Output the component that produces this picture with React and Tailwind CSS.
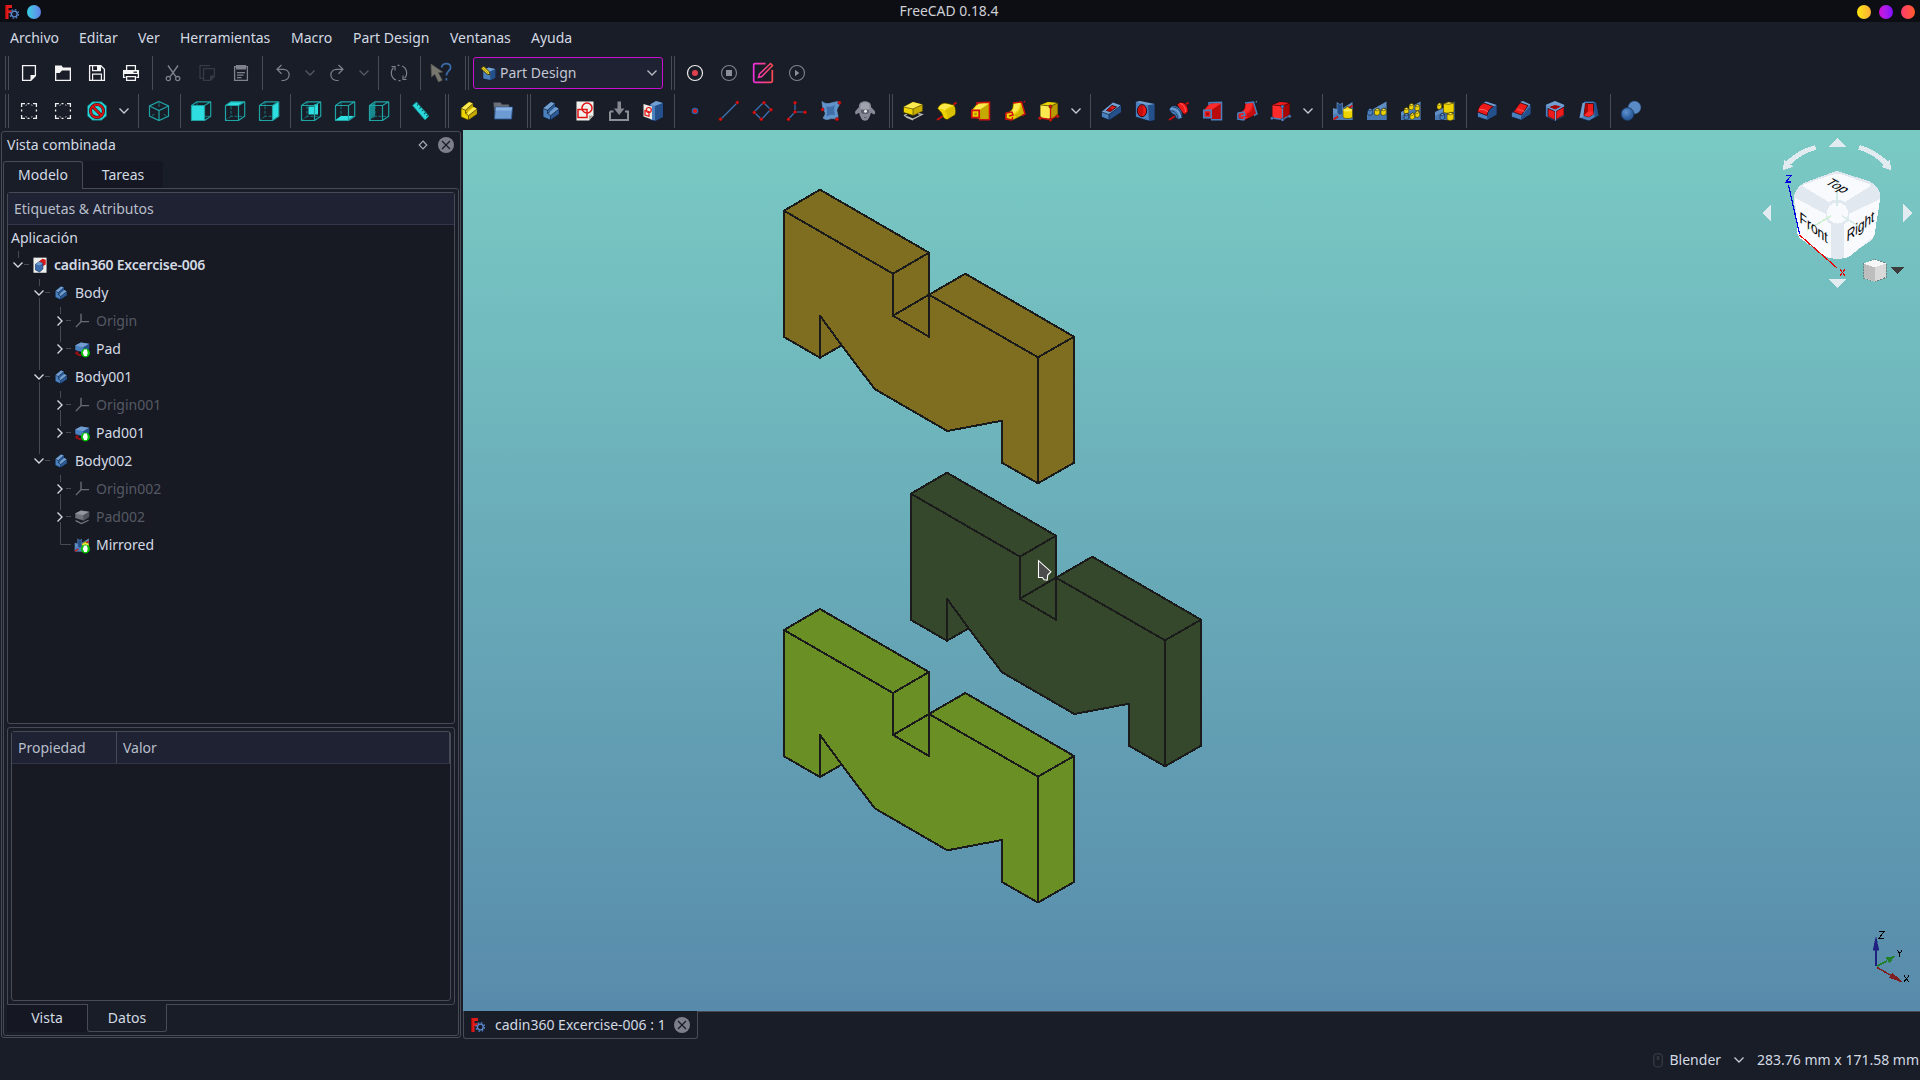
import React from "react";

/* ---------- icon primitives: every icon lives in a 22x22 box ---------- */
const Ic = ({ children, size = 22 }) => (
  <svg width={size} height={size} viewBox="0 0 22 22" fill="none" className="block shrink-0 overflow-visible">
    {children}
  </svg>
);

const Y = { a: "#fce94f", b: "#edd400", c: "#b79b00", o: "#3a3200" };
const R = { a: "#ff2b2b", b: "#ef1a1a", c: "#a80505", o: "#2b0505" };
const B = { a: "#729fcf", b: "#4a80bd", c: "#24508c", o: "#0b1a33" };

const Chevron = ({ color = "#c9ccd4" }) => (
  <svg width="12" height="8" viewBox="0 0 12 8" fill="none" className="block shrink-0">
    <path d="M1.5 1.5 6 6l4.5-4.5" stroke={color} strokeWidth="1.3" />
  </svg>
);

const Logo = ({ size = 14 }) => (
  <svg width={size} height={size} viewBox="0 0 14 14" fill="none" className="block shrink-0">
    <path d="M0 0h7v3H3.500v2.300h3v2.700h-3V14H0z" fill="#e21b1b" />
    <path d="M0 0h1.300V14H0z" fill="#a30b0b" />
    <circle cx="9.3" cy="9" r="4.3" stroke="#4f7cc0" strokeWidth="1.3" strokeDasharray="1.7 1.68" />
    <circle cx="9.3" cy="9" r="2.900" stroke="#5b8bd0" strokeWidth="1.400" fill="#161a28" />
  </svg>
);

const CloseDot = () => (
  <svg width="16" height="16" viewBox="0 0 16 16" className="block shrink-0">
    <circle cx="8" cy="8" r="8" fill="#7c7f8a" />
    <path d="M4 4l8 8M12 4l-8 8" stroke="#1a1d28" strokeWidth="1.3" />
  </svg>
);

/* ---------- file toolbar ---------- */
const INew = () => (
  <Ic><path d="M4.6 3.6h12.8v10.2l-4.6 4.6H4.6z" stroke="#f4f4f4" strokeWidth="1.3" /><path d="M18 13h-5.500v6z" fill="#f4f4f4" /></Ic>
);
const IOpen = () => (
  <Ic><path d="M3 4v15h16V5.500h-8L9.500 3.500H3z" fill="#f4f4f4" /><path d="M4.300 11h3.400l2.300-2.500h7.700v9.200H4.300z" fill="#191d28" /></Ic>
);
const ISave = () => (
  <Ic>
    <path d="M3.600 3.600h11.200l3.600 3.600v11.200H3.600z" stroke="#f4f4f4" strokeWidth="1.3" />
    <path d="M6.600 3.600v5h7.800v-5M6.600 18.400v-6.200h8.800v6.200" stroke="#f4f4f4" strokeWidth="1.2" />
    <path d="M11 4h3v4h-3z" fill="#f4f4f4" />
  </Ic>
);
const IPrint = () => (
  <Ic>
    <path d="M6.600 8V3.600h8.800V8M5.500 15.400H3.600V8.600h14.800v6.800h-2" stroke="#f4f4f4" strokeWidth="1.3" />
    <path d="M3.500 8.500h15v3.500h-15z" fill="#f4f4f4" /><path d="M13.500 9.600h3.500v1.200h-3.500z" fill="#191d28" />
    <path d="M6.600 14.600h8.800v3.800H6.600z" stroke="#f4f4f4" strokeWidth="1.3" />
  </Ic>
);
const ICut = () => (
  <Ic>
    <path d="M6 3.500l7.800 11.200M16 3.500L8.200 14.700" stroke="#7f828c" strokeWidth="1.400" />
    <circle cx="6.300" cy="16.500" r="2.100" stroke="#7f828c" strokeWidth="1.2" /><circle cx="15.700" cy="16.500" r="2.100" stroke="#7f828c" strokeWidth="1.200" />
  </Ic>
);
const ICopy = () => (
  <Ic>
    <path d="M13.500 4V3.600H4v12.800h3" stroke="#363a42" strokeWidth="1.3" />
    <path d="M7.600 6.600h10.800v7.800l-4 4H7.600z" stroke="#363a42" strokeWidth="1.3" /><path d="M19 13.500h-5V19z" fill="#363a42" />
  </Ic>
);
const IPaste = () => (
  <Ic>
    <path d="M4.600 4.600h12.800v13.800H4.600z" stroke="#7f828c" strokeWidth="1.3" />
    <path d="M6 3h10v4.500H6zM7 10h8v1.200H7zM7 12.500h6.500v1.200H7zM7 15h4.500v1.200H7z" fill="#7f828c" />
  </Ic>
);
const IUndo = () => (
  <Ic><path d="M9.500 3 5 7.300l4.500 4.400M5 7.300h6.500a5.600 5.600 0 1 1 0 11.200h-2" stroke="#7f828c" strokeWidth="1.200" /></Ic>
);
const IRedo = () => (
  <Ic><path d="M12.500 3 17 7.300l-4.500 4.400M17 7.300h-6.500a5.600 5.600 0 1 0 0 11.200h2" stroke="#7f828c" strokeWidth="1.200" /></Ic>
);
const IRefresh = () => (
  <Ic>
    <path d="M8 18a7.600 7.600 0 0 1-2.500-12.300M14 4a7.600 7.600 0 0 1 2.500 12.300" stroke="#7f828c" strokeWidth="1.200" />
    <path d="M3.500 4.500H7v4M18.500 17.500H15v-4M9.500 3.400a8 8 0 0 1 2-.1M10.500 18.700a8 8 0 0 0 2-.1" stroke="#7f828c" strokeWidth="1.200" />
  </Ic>
);
const IHelp = () => (
  <Ic>
    <path d="M1 2l.5 13 3.300-2.800L8.500 20l3.800-1.800-3.900-7.400 4.300-.8z" fill="#77776f" stroke="#55554f" strokeWidth=".6" />
    <path d="M11.500 5.500C12 2.800 14 1.600 16.300 1.600c2.700 0 4.300 1.700 4.300 3.800 0 3.500-4.200 3.600-4.200 8.100M16.400 16v2.500" stroke="#3a6ca8" strokeWidth="1.700" />
  </Ic>
);
const IRecord = () => (<Ic><circle cx="11" cy="11" r="7.500" stroke="#ececec" strokeWidth="1.200" /><circle cx="11" cy="11" r="3" fill="#e0404f" /></Ic>);
const IStop = () => (<Ic><circle cx="11" cy="11" r="7.500" stroke="#7f828c" strokeWidth="1.100" /><path d="M8 8h6v6H8z" fill="#8b8e98" /></Ic>);
const IEdit = () => (
  <Ic>
    <defs><linearGradient id="pinkEdit" gradientUnits="userSpaceOnUse" x1="1" y1="0" x2="21" y2="0"><stop offset="0" stopColor="#f02fe0" /><stop offset="1" stopColor="#fb4a50" /></linearGradient></defs>
    <path d="M13.500 1.600H3q-1.300 0-1.300 1.300V19q0 1.300 1.300 1.300h16q1.300 0 1.300-1.300V8" stroke="url(#pinkEdit)" strokeWidth="1.700" />
    <path d="M6.500 15.500l1-3.500L18.500 1.500l2 2L9.800 14.500z" stroke="url(#pinkEdit)" strokeWidth="1.500" />
  </Ic>
);
const IPlay = () => (<Ic><circle cx="11" cy="11" r="7.500" stroke="#7f828c" strokeWidth="1.100" /><path d="M9 7.800 13.300 11 9 14.200z" fill="#8b8e98" /></Ic>);

/* ---------- view toolbar ---------- */
const IFit = () => (
  <Ic>
    <path d="M3.600 7V3.600H7M15 3.600h3.400V7M18.400 15v3.400H15M7 18.400H3.600V15" stroke="#f0f0f0" strokeWidth="1.300" />
    <path d="M9.500 3.600h3M9.500 18.400h3M3.600 9.500v3M18.400 9.500v3" stroke="#f0f0f0" strokeWidth="1.300" strokeDasharray="2 1.500" />
    <path d="M7.500 5.500l1.500-.8M13 4.700l1.500.8M7.500 16.500l1.500.8M13 17.300l1.500-.8" stroke="#a9abb2" strokeWidth="1" />
  </Ic>
);
const IDraw = () => (
  <Ic>
    <path d="M6.500 1.800h9L20.500 6v10l-5 4.200h-9L1.500 16V6z" fill="#28d5d8" stroke="#0e7577" strokeWidth=".8" />
    <circle cx="11" cy="11" r="6.500" stroke="#3a0808" strokeWidth="3" /><path d="M6.500 6.500l9 9" stroke="#3a0808" strokeWidth="3" />
    <circle cx="11" cy="11" r="6.500" stroke="#d81414" strokeWidth="1.900" /><path d="M6.500 6.500l9 9" stroke="#d81414" strokeWidth="1.900" />
  </Ic>
);
const T = "#1fa3a4";
const IIso = () => (
  <Ic>
    <path d="M11 1.500 20.500 6v10L11 20.500 1.500 16V6zM1.500 6 11 10.500 20.500 6M11 10.500v10" stroke={T} strokeWidth="1.200" />
    <path d="M11 2v5M4 15.500l2.500-1.200M18 15.500l-2.500-1.200" stroke="#16797b" strokeWidth="1" />
  </Ic>
);
const faces = {
  front: "M1.500 5.500h13v15h-13z",
  top: "M1.500 5.500 7 1.800h13.700l-6.200 3.700z",
  right: "M14.500 5.500l6.200-3.700v14.500l-6.200 4.200z",
  rear: "M8.500 6.500h6V4H18v10.500H8.500z",
  bottom: "M1.500 20 7 16h13l-5.500 4z",
  left: "M1.500 5.500 7 3v12.500l-5.500 4.500z",
};
const ICube = ({ face }) => (
  <Ic>
    <path d="M7 1.800v14.500h13.700M7 16.300l-5.500 4.200" stroke="#16797b" strokeWidth="1" strokeDasharray={face === "front" ? "0" : "3 1.500"} />
    <path d={faces[face]} fill={face === "left" ? "#168a8e" : "#2edfe2"} />
    <path d="M1.500 5.500h13v15h-13zM1.500 5.500 7 1.800h13.700v14.500l-6.200 4.200M14.500 5.500l6.200-3.700" stroke={T} strokeWidth="1.200" strokeLinejoin="round" />
  </Ic>
);
const IRuler = () => (
  <Ic>
    <path d="M2.500 5.500 6.500 2l12.500 14-4 4z" fill="#2bd9dc" stroke="#127d80" strokeWidth=".8" />
    <path d="M8.500 4.200 7 5.500M11 7 9.300 8.600M13.300 9.700l-1.600 1.500M15.700 12.500 14 14M17.800 15l-1.500 1.300" stroke="#0d5f62" strokeWidth="1.100" />
  </Ic>
);

/* ---------- part design toolbar ---------- */
const Step = ({ c, size }) => (
  <Ic size={size}>
    <path d="M3 8.500 11 2l4 1.500v3l4 2.500v5L10 20l-7-3z" fill={c.b} stroke={c.o} strokeWidth=".8" />
    <path d="M3 8.500 11 2l4 1.500-7.500 6.700z" fill={c.a} /><path d="M9 12.500l7-5.500 3 2-8.500 6.700z" fill={c.a} />
    <path d="M10.500 15.700 19 9v5l-8.500 6zM7.500 10.200 15 3.500V7l-6 5.300z" fill={c.c} opacity=".75" />
    <path d="M3 8.500l4.500 1.700v3L10.500 15.700V20M7.500 10.200 15 3.500M10.500 15.700 19 9M7.500 13.200l2-1" stroke={c.o} strokeWidth=".7" />
  </Ic>
);
const IPart = () => <Step c={Y} />;
const IBody = () => <Step c={B} />;
const IGroup = () => (
  <Ic>
    <path d="M1.500 2.500h7l1.500 2h7V17h-14z" fill="#6d7076" stroke="#3e4148" strokeWidth=".6" />
    <path d="M3.500 7h17l-1 12h-17z" fill="#6d9bd4" stroke="#2c5896" strokeWidth=".8" /><path d="M4 7.600h15.800l-.3 3H3.700z" fill="#8ab4e4" />
  </Ic>
);
const ISketch = () => (
  <Ic>
    <path d="M2.500 1.500h17v14l-4.500 5H2.500z" fill="#f3f1ec" /><path d="M19.500 15.500H15v5z" fill="#a9a9a0" />
    <path d="M4 9.500h9v8H4z" stroke="#df1515" strokeWidth="1.500" /><circle cx="13" cy="8" r="5" stroke="#df1515" strokeWidth="1.500" />
  </Ic>
);
const IMap = () => (
  <Ic>
    <path d="M2 11.500V20h18v-8.500h-3" stroke="#8c8f96" strokeWidth="2" /><path d="M2 11.500h3.500" stroke="#8c8f96" strokeWidth="2" />
    <path d="M9.500 1.500h3.500v7h3.500L11.200 15 6 8.500h3.500z" fill="#85888f" />
  </Ic>
);
const IMapSketch = () => (
  <Ic>
    <path d="M8 4.500 14 1l7 2v14l-8 4-5-1z" fill={B.b} stroke={B.o} strokeWidth=".7" /><path d="M8 4.500 14 1l7 2-8 3z" fill={B.a} /><path d="M13 6l8-3v14l-8 4z" fill={B.c} />
    <path d="M1.500 4 10 6.500v13l-8.500-3z" fill="#eeeae4" /><path d="M3 10.500l4 1.200v4.500l-4-1.200z" stroke="#df1515" strokeWidth="1.200" /><circle cx="6.800" cy="10" r="2.500" stroke="#df1515" strokeWidth="1.200" />
  </Ic>
);
const Dot = ({ x, y, r = 1.700, f = "#e01414" }) => <circle cx={x} cy={y} r={r} fill={f} stroke="#5f0606" strokeWidth=".5" />;
const IPoint = () => (<Ic><circle cx="11" cy="11" r="3.300" fill="#2f62a5" /><circle cx="11" cy="11" r="2" fill="#e01414" /></Ic>);
const ILine = () => (<Ic><path d="M2.500 19.500 19.500 2.500" stroke="#3c73b4" strokeWidth="1.200" /><Dot x={2.500} y={19.300} /><Dot x={19.300} y={2.500} /></Ic>);
const IPlane = () => (<Ic><path d="M11.500 2.500 18.500 9.500 9.500 19.500 2 12z" stroke="#3c73b4" strokeWidth="1.300" /><Dot x={12} y={2.700} /><Dot x={19} y={9.700} /><Dot x={9.300} y={19.300} /><Dot x={2.300} y={12.500} /></Ic>);
const IAxes = () => (<Ic><path d="M9 12V3M9 12h10M9 12l-6.500 7" stroke="#3c73b4" strokeWidth="1.200" /><Dot x={9} y={2.700} /><Dot x={9} y={12} /><Dot x={19} y={12.300} /><Dot x={2.500} y={19.300} /></Ic>);
const IBinder = () => (
  <Ic>
    <path d="M2 1.500c3 2.500 6 2.500 9 1.500 3-.8 6-1.500 9-1.500.5 4-4 6.500-3 10 .7 2.500 1.500 5 .5 8-3-.5-5-1.500-8-.5-2 .8-4 .8-6.500-1 2-3 3-4.500 1.500-6.500C2.500 9.500 2.500 5 2 1.500z" fill="#5f93cc" stroke={B.a} strokeWidth=".6" />
    <path d="M6 6.500c3 .5 6 .5 9-1.500-1.500 4-1 6 0 10-3-.5-5-.5-8.500 1.500C7.500 13 7 9 6 6.500z" fill={B.c} opacity=".55" />
    <Dot x={19.500} y={2.700} /><Dot x={2.500} y={9.500} /><Dot x={17} y={19.300} />
  </Ic>
);
const ISheep = () => (
  <Ic>
    <path d="M5 7C4.500 3.500 7 1.200 11 1.200s6.500 2.300 6 5.800l3.800 4c.8 1.500.3 3-.8 3.500l-3.200-1.800c-.5 3.500-1.800 5-2.800 6.800-.8 1.500-5.200 1.500-6 0-1-1.800-2.300-3.300-2.800-6.800L2 14.500C1.200 14 .7 12.500 1.500 11z" fill="#868995" />
    <path d="M6.500 6C6.500 3.500 8 2.500 11 2.500s4.500 1 4.500 3.500v3h-9z" fill="#a0a3ad" /><path d="M7 10h8v2.500l-2 1.500H9l-2-1.500z" fill="#5c5f6b" /><circle cx="11.500" cy="11.300" r="1.500" fill="#eceef2" /><path d="M10 17.500h2.500" stroke="#5c5f6b" />
  </Ic>
);
const IPad = () => (
  <Ic>
    <path d="M2 15.500l9 3.500 9-4.500-4-1M2 15.500l3-1.500M4 17l7 3" stroke="#b9bab5" strokeWidth="1.300" />
    <path d="M1.500 7 11 2l9.500 2.500v6.500L11 15.500l-9.500-3z" fill={Y.b} stroke={Y.o} strokeWidth=".8" />
    <path d="M1.500 7 11 2l9.500 2.500L11 9z" fill={Y.a} /><path d="M11 9l9.500-4.500v6.500L11 15.500z" fill={Y.c} opacity=".7" />
    <path d="M1.500 7 11 9l9.500-4.500M11 9v6.500" stroke={Y.o} strokeWidth=".6" />
  </Ic>
);
const IRevolve = () => (
  <Ic>
    <path d="M17 5l3.500-2.500M1 20l6-4" stroke="#c80f0f" strokeWidth="2" />
    <path d="M1.500 8.500C3 4.500 6.500 2.500 10 3l8 2c2 3 2.300 7.500 1 10l-7.500 4.500c-2.500 0-3.500-1-4.500-3L5.500 13z" fill={Y.b} stroke={Y.o} strokeWidth=".8" />
    <path d="M2.500 8.500C4.500 5 7.500 3.700 10.500 4l7 1.700c-3.500.3-6.500 1.800-8.500 4.800C7 9.200 5 8.500 2.500 8.500z" fill={Y.a} /><path d="M11.500 19c0-3-.5-6-2.500-8.500l9-4.500c1.500 3 1.200 6 .5 8.500z" fill={Y.c} opacity=".35" />
  </Ic>
);
const Loft = ({ f, o }) => (
  <Ic>
    <path d="M2 10 7.500 3.500 19.500 2.500v17L8 18.500l-6-2z" fill={f.b} />
    <path d="M10 9.500 19.500 3.500v16L8 18.500z" fill={f.c} opacity=".75" /><path d="M3 10 9 3.800l10-.8-9 6.500z" fill={f.a} />
    <path d="M7 5V2.800l12.500-.5v17.500H9" stroke={o} strokeWidth="1.500" /><path d="M1.800 10.300h7.400v7.400H1.800z" fill={f.b} stroke={o} strokeWidth="1.700" /><path d="M4.200 12.700h2.600v2.600H4.200z" fill={f.c} />
  </Ic>
);
const Sweep = ({ f, o }) => (
  <Ic>
    <path d="M2 13 6 11.500C8.500 9.500 9 7 9 3l8.500-1 3.500 12-6 3-6 3-7-1.500z" fill={f.b} stroke={f.o} strokeWidth=".7" />
    <path d="M7 11.500C9.500 9.500 10 7 10 4l6-1c0 6-3 9-8 11z" fill={f.a} />
    <path d="M10 15c4.500-2 6.500-5 7-10.500l3.500 9-8 4.500z" fill={f.c} opacity=".55" />
    <path d="M9 3l8.500-1 3.500 12-3 1.500M20 2.500l.7-1.500" stroke={o} strokeWidth="1.400" /><path d="M1.800 13l6.200-1 1 3-4 1M1.800 13v6l6 1 1-3" stroke={o} strokeWidth="1.500" />
  </Ic>
);
const PrimBox = ({ f, d }) => (
  <Ic>
    <path d="M2.500 5 10 2l9.500 1v12L13 19.500 2.500 18z" fill={f.b} stroke={f.o} strokeWidth=".7" />
    <path d="M2.500 5 10 2l9.500 1L13 6z" fill={f.b} /><path d="M2.500 5 13 6v13.500L2.500 18z" fill={f.a} /><path d="M13 6l6.500-3v12L13 19.500z" fill={f.c} />
    <path d="M2.500 5 13 6l6.500-3" stroke={f.o} strokeWidth=".7" />
    <path d="M12.500 6.500v13M2.500 18l10 1.500 7-4" stroke={d} strokeWidth="1.300" />
    {[[12.5, 6.5], [2, 18.3], [12.5, 19.8], [19.5, 16.3]].map(([x, y]) => <circle key={x + "-" + y} cx={x} cy={y} r="1.700" fill={d} stroke={f.o} strokeWidth=".4" />)}
  </Ic>
);
const IPocket = () => (
  <Ic>
    <path d="M1.500 12 13 2.500l8 3V12L9 20l-7.500-3z" fill={B.b} stroke={B.o} strokeWidth=".7" /><path d="M1.500 12 13 2.500l8 3L9 14.500z" fill={B.a} /><path d="M9 14.500 21 5.500V12L9 20z" fill={B.c} />
    <path d="M6.500 10.500 12 5.500l4.500 1.500-6 4.500z" fill={R.b} stroke={R.o} strokeWidth=".9" /><path d="M6.500 10.500l3-2.500 3 1.200-2 2.300z" fill={R.c} />
    <path d="M1.500 12 9 14.500 21 5.500M9 14.500V20" stroke={B.o} strokeWidth=".7" />
  </Ic>
);
const IHole = () => (
  <Ic>
    <path d="M1.500 2 6 1l14.500 3v16L15 21 1.500 17z" fill={B.b} stroke={B.o} strokeWidth=".7" /><path d="M14 5l6.500-1v16L15 21z" fill={B.c} /><path d="M1.500 2 6 1l14.500 3L14 5z" fill={B.a} />
    <ellipse cx="8" cy="10.700" rx="4.600" ry="6" fill={R.b} stroke={R.o} strokeWidth="1" /><path d="M8 5c2 1.500 2 9.500-.5 11.500C3 14 3 8 8 5z" fill={R.c} opacity=".6" />
  </Ic>
);
const IGroove = () => (
  <Ic>
    <path d="M17 5l3.500-2.500M1 20l6-4" stroke="#c80f0f" strokeWidth="2" />
    <path d="M9 4.500C11 2 14 2 16 3c3 2 4.500 5 4 8.500l-3 3c-2-1-4-2.500-5-5z" fill={R.b} stroke={R.o} strokeWidth=".7" /><path d="M12 3.500c3 .5 5.500 4 5.500 8.500" stroke="#ff6060" strokeWidth="1" />
    <path d="M1 10C2 6.500 5 5 8 6c4 1.500 7 6 6.500 11.500L11 19.500c-2.500-.5-3.500-2-4-4.500L4.500 14z" fill={B.b} stroke={B.o} strokeWidth=".7" /><path d="M2.500 9c4-1.500 9.500 2.500 10 9" stroke={B.a} strokeWidth="1.500" /><path d="M5 7c4.500 0 8.700 4.500 8.700 10M2 11c4-1 7.500 3 8 8" stroke={B.o} strokeWidth=".6" />
  </Ic>
);

/* ---------- transforms and dress-up ---------- */
const Backdrop = () => <><path d="M1 12 8 8.500 20.500 1.500v18.500H1z" fill="#5f8fc4" /><path d="M1 16l19.500-10v14H1z" fill="#3868a4" opacity=".6" /></>;
const Blk = ({ x, y, s = 5, c = Y }) => (
  <g stroke={c.o} strokeWidth=".6"><path d={`M${x} ${y + 1.2}l${s * 0.5}-1.800 ${s * 0.55} 1v${s * 0.9}l-${s * 0.5} 1.500-${s * 0.55}-.8z`} fill={c.b} /><path d={`M${x} ${y + 1.2}l${s * 0.5}-1.800 ${s * 0.55} 1-${s * 0.5} 1.400z`} fill={c.a} /></g>
);
const Mirror = ({ size }) => (
  <Ic size={size}>
    <path d="M1 8 8 10 14 6 20.500 2v18H1z" fill="#5f8fc4" /><path d="M1 15l19.500-9v14H1z" fill="#3f6fab" opacity=".6" />
    <path d="M5 2.500 8 4.500 10.500 3v11L8 15.500 5 13z" fill={B.c} stroke={B.a} strokeWidth=".6" /><path d="M1.500 19.500l4.500-3M17 8l3.500-2.500" stroke="#d01212" strokeWidth="2" />
    <path d="M11 10c0-1 2-2 3-2l.5-1.500h2L17 8c1.500 0 3.500 1 3.500 2v7c-1 2-8.500 2-9.500 0z" fill={Y.b} stroke={Y.o} strokeWidth=".6" /><ellipse cx="15.700" cy="10" rx="4.300" ry="1.500" fill={Y.a} />
  </Ic>
);
const ILinear = () => (<Ic><Backdrop /><Blk x={1.500} y={9} s={5} c={B} /><Blk x={8.500} y={9} s={5} /><Blk x={15} y={9} s={5} /></Ic>);
const IPolar = () => (<Ic><Backdrop /><Blk x={4} y={8} s={4.500} /><Blk x={9} y={4} s={4.500} /><Blk x={15} y={5} s={4.500} /><Blk x={15} y={11.500} s={4.500} /><Blk x={10} y={13.500} s={4.500} /><Blk x={4} y={14} s={4.500} c={B} /></Ic>);
const IMulti = () => (<Ic><Backdrop /><Blk x={3} y={3.500} s={4.500} /><Blk x={9.500} y={2.500} s={10} /><Blk x={6} y={14} s={4.500} c={B} /><Blk x={13} y={13} s={6.500} /></Ic>);
const IFillet = () => (
  <Ic>
    <path d="M1.500 13C2 7 5 3 10 1.500L20.500 5v9.500L11 20 1.500 17z" fill={B.b} stroke={B.o} strokeWidth=".7" /><path d="M11 16c0-5 3-9 9.500-11v9.500L11 20z" fill={B.c} /><path d="M10 1.500 20.500 5l-3 1.500L7.500 3z" fill={B.a} />
    <path d="M1.500 12C2 8 4 4.500 8 3l9.500 3.500c-4 2-6 5-6.500 9z" fill={R.b} stroke={R.o} strokeWidth=".8" /><path d="M3 9.500c3-.5 6 0 9 2.500" stroke="#ff6b6b" strokeWidth="1" />
  </Ic>
);
const IChamfer = () => (
  <Ic>
    <path d="M1.500 13.500 11 1.500l9.500 3V14L11 20l-9.500-3z" fill={B.b} stroke={B.o} strokeWidth=".7" /><path d="M11 16.500l9.500-11V14L11 20z" fill={B.c} /><path d="M10 2l3-1 7.500 3.500-2.500 1z" fill={B.a} />
    <path d="M3.500 12 10 2.700 18 5.500 11.500 15z" fill={R.b} stroke={R.o} strokeWidth=".8" /><path d="M7 9l7.500 2.500" stroke="#ff5d5d" strokeWidth="1.500" opacity=".6" />
  </Ic>
);
const IDraft = () => (
  <Ic>
    <path d="M1.500 5 11 1l9.500 4v11L11 21l-9.500-4.500z" fill={B.b} stroke={B.o} strokeWidth=".7" /><path d="M1.500 5 11 1l9.500 4L11 9z" fill={B.a} />
    <path d="M4 8.500l7 3V20l-7-3.500zM12 11.500l8-4.500V15l-8 4.500z" fill={R.b} stroke={R.o} strokeWidth=".7" /><path d="M5 7 11 5l6 1.500-6 3z" fill={R.c} />
    <path d="M11.500 10.500V20.500M2.500 6.500l9 4 8.500-5" stroke={B.a} strokeWidth="1.200" />
  </Ic>
);
const IShell = () => (
  <Ic>
    <path d="M4.500 3 7 1.200h8.500L18 2.500l2.500 13L11 21l-9.500-3z" fill={B.b} stroke={B.o} strokeWidth=".7" /><path d="M4.500 3 1.500 18l4-1.500L8 3z" fill={B.a} /><path d="M15.500 1.500l2.500 1 2.500 13L16.500 17z" fill={B.c} />
    <path d="M7.500 3.500h8V14L11 17l-5-1.500z" fill={R.b} stroke={R.o} strokeWidth=".8" /><path d="M7.500 3.500h2.500v8L6 15.500z" fill={R.c} /><path d="M6 15.500 10 11.500h5.500V14L11 17z" fill={R.a} />
  </Ic>
);
const IBool = () => (
  <Ic>
    <defs><radialGradient id="ballBlue" cx=".4" cy=".35"><stop offset="0" stopColor="#5d92cf" /><stop offset="1" stopColor="#2d5f9f" /></radialGradient></defs>
    <circle cx="14.500" cy="7.500" r="6.200" fill="#5a8bc4" stroke="#4272ac" strokeWidth=".6" /><circle cx="7.500" cy="14" r="6.400" fill="url(#ballBlue)" stroke="#1c3b68" strokeWidth=".9" />
  </Ic>
);
const IWorkbench = () => (
  <Ic size={16}>
    <path d="M4 7 12 3.500 21 5.500v12l-7 3.500L4 19z" fill={B.b} stroke={B.o} strokeWidth=".8" /><path d="M14 8.500l7-3v12L14 21z" fill={B.c} /><path d="M4 7l8-3.500 9 2-7 3z" fill={B.a} />
    <path d="M1.500 5 5 1.500l7.500 7.500 1.500 4.500-4.500-1z" fill="#e8d22a" stroke="#3a3200" strokeWidth="1.200" /><path d="M3.500 3.500l7.500 7.500" stroke="#8a7a10" strokeWidth=".8" />
  </Ic>
);

/* ---------- toolbar pieces ---------- */
const Cell = ({ children }) => <div className="flex w-[34px] shrink-0 items-center justify-center">{children}</div>;
const Drop = ({ dim }) => <div className="flex w-5 shrink-0 items-center justify-center"><Chevron color={dim ? "#565964" : "#c9ccd4"} /></div>;
const Sep = () => <div className="flex w-2 shrink-0 justify-center pl-px"><div className="h-[34px] w-px bg-[#484b56]" /></div>;
const Handle = ({ first }) => (
  <div className={first ? "flex w-3 shrink-0 gap-0.5 pl-[5px]" : "flex w-[14px] shrink-0 gap-0.5 pl-[7px]"}>
    <div className="h-[34px] w-px bg-[#484b56]" /><div className="h-[34px] w-px bg-[#484b56]" />
  </div>
);
const Bar = ({ items }) => items.map((it, i) => {
  if (it === "|") return <Sep key={i} />;
  if (it === "v") return <Drop key={i} />;
  if (it === "d") return <Drop key={i} dim />;
  if (it === "H") return <Handle key={i} />;
  return <Cell key={i}>{it}</Cell>;
});

const menus = [
  ["Archivo", "w-[69px]"], ["Editar", "w-[59px]"], ["Ver", "w-[42px]"], ["Herramientas", "w-[111px]"],
  ["Macro", "w-[62px]"], ["Part Design", "w-[97px]"], ["Ventanas", "w-[81px]"], ["Ayuda", "w-[60px]"],
];

/* ---------- model tree ---------- */
const line = "#474a55";
const Branch = ({ kind, last }) => (
  <svg width="21" height="28" viewBox="0 0 21 28" fill="none" className="block shrink-0">
    {kind === "pass" && <path d="M10.500 0v28" stroke={line} />}
    {(kind === "open" || kind === "closed") && (
      <>
        <path d={last ? "M10.500 0v7M16 13.500h5" : "M10.500 0v7M10.500 19v9M16 13.500h5"} stroke={line} />
        <path d={kind === "open" ? "M5.500 11.500l4.500 4.500 4.500-4.500" : "M7.500 9.500l4.500 4.500L7.500 18.500"} stroke="#d5d8de" strokeWidth="1.400" />
      </>
    )}
    {kind === "leaf" && <path d="M10.500 0v13.500H21" stroke={line} />}
  </svg>
);
const Eye = () => <><circle cx="15.200" cy="15.800" r="5.500" fill="#06c306" /><path d="M13.500 11.500h3.500l1 4-1 4h-3.500l-1.500-4z" fill="#fff" /></>;
const TDoc = () => (
  <Ic size={18}>
    <path d="M3 2h16v18.500H3z" fill="#efefec" /><path d="M10 6.500l4-3 4 1v6l-4 2-4-2z" fill="#d81818" />
    <path d="M5.500 10 10 7l4.500 2v7l-4 3.500-5-2.500z" fill="#3c6cab" stroke="#16305a" strokeWidth=".8" /><path d="M5.500 10 10 7l4.500 2-4 2.500z" fill="#6f9bd0" />
  </Ic>
);
const TOrigin = () => <Ic size={18}><path d="M9.800 11.500V2M9.800 11.800h9.800M9.800 11.800 3.500 18.500" stroke="#696c76" strokeWidth="1.700" /></Ic>;
const TPad = ({ gray }) => (
  <Ic size={18}>
    <g transform="translate(3.200 3.200) scale(.72)">
      {gray
        ? <path d="M0 17l10 5 12-5.500" stroke="#777980" strokeWidth="2" />
        : <path d="M0 18l9 4M0 18l4-3" stroke="#a01010" strokeWidth="3" />}
      <path d="M-1 5 9 0l14 2v9l-10 6-14-4z" fill={gray ? "#6f727a" : B.b} stroke="#15181f" strokeWidth=".8" />
      <path d="M-1 5 9 0l14 2-10 6z" fill={gray ? "#93969d" : B.a} /><path d="M13 8l10-6v9l-10 6z" fill={gray ? "#50535b" : B.c} />
    </g>
    {!gray && <Eye />}
  </Ic>
);
const TMirror = () => (
  <div className="relative"><Mirror size={16} /><div className="absolute -left-px -top-px"><Ic size={18}><Eye /></Ic></div></div>
);
const tree = [
  { b: ["open!"], icon: <TDoc />, label: "cadin360 Excercise-006", bold: true },
  { b: ["none", "open"], icon: <Step c={B} size={16} />, label: "Body" },
  { b: ["none", "pass", "closed"], icon: <TOrigin />, label: "Origin", dim: true },
  { b: ["none", "pass", "closed!"], icon: <TPad />, label: "Pad" },
  { b: ["none", "open"], icon: <Step c={B} size={16} />, label: "Body001" },
  { b: ["none", "pass", "closed"], icon: <TOrigin />, label: "Origin001", dim: true },
  { b: ["none", "pass", "closed!"], icon: <TPad />, label: "Pad001" },
  { b: ["none", "open!"], icon: <Step c={B} size={16} />, label: "Body002" },
  { b: ["none", "none", "closed"], icon: <TOrigin />, label: "Origin002", dim: true },
  { b: ["none", "none", "closed"], icon: <TPad gray />, label: "Pad002", dim: true },
  { b: ["none", "none", "leaf"], icon: <TMirror />, label: "Mirrored" },
];

/* ---------- 3D scene ---------- */
const Solid = ({ dx, dy, fill }) => (
  <g transform={`translate(${dx} ${dy})`} stroke="#1b1b1b" strokeWidth="2" strokeLinejoin="round" shapeRendering="crispEdges">
    <path fill={fill} d="M784 210.700 820 189.700 929 252.700V294.700L965.300 273.700 1074 336.700V462.700L1038 483.300 1002 462.700V420.700L947.300 431 874.700 389 841.700 345.300 820 357.700 784 337z" />
    <path fill="none" d="M784 210.700 893 273.700 929 252.700M893 273.700V315.700L929 294.700 1038 357.300 1074 336.700M1038 357.300V483.300M929 294.700V336.700L893 315.700M820 357.700V315.700L841.700 345.300" />
  </g>
);
const NavCube = () => (
  <g shapeRendering="crispEdges">
    <g fill="#e1ebf0">
      <path d="M1837.500 138l8.500 9h-17zM1837.500 288l8.500-9h-17zM1763 213l8-8.500v17zM1912 213l-9-9v18z" />
      <path d="M1783 170l1-10 2 1.500c8-8 18-13.500 29-16.500l1.500 4.500c-10 3-19 8-26 15l2.500 2.500z" />
      <path d="M1891 170l-1-10-2 1.500c-8-8-18-13.500-28-16.500l-1.500 4.500c10 3 18 8 25 15l-2.500 2.500z" />
    </g>
    <path d="M1832 172.500q5-2.500 10 0l28 9c7 4 10 9 10.500 15.500l-6 38q-1 4-4 6l-24 16q-9 4-18 0l-25-17q-3.500-3-4-7l-6-32c0-9 4-14 10-18z" fill="#e1e8ef" />
    <g fill="#f8fafd">
      <path d="M1804 184.500 1834 174q3.500-1 7 0l28 10q2 1.500 0 3l-24 15q-8-5-16 0l-25-15q-2-1.500 0-2.500z" />
      <path d="M1795 198l31 16c-1 6 2 9 5 10v34q-3 0-6-2l-24-17q-3-2-3.500-5z" />
      <path d="M1880 199l-31 15c1 6-2 9-5 10v34q3 0 6-2l21-17q3-2 3.500-5z" />
      <circle cx="1837.500" cy="213" r="10.500" />
    </g>
    <path d="M1837 179v27" stroke="#d5ebe8" strokeWidth="1.500" /><path d="M1831 216l-24 14" stroke="#c9f0cf" strokeWidth="1.500" /><path d="M1842 216l20 12" stroke="#d5ebe8" strokeWidth="1.500" />
    <g fontFamily="'Liberation Sans'" fill="#000">
      <text transform="matrix(.76 .42 -.8 .45 1824 183)" fontSize="15.500">Top</text>
      <text transform="matrix(.78 .6 0 1 1799.500 222)" fontSize="15.500">Front</text>
      <text transform="matrix(.74 -.56 -.04 1 1846.500 242)" fontSize="16">Right</text>
    </g>
    <path d="M1788.500 185l11 49" stroke="#0000e0" strokeWidth="1.200" /><path d="M1799.500 235l37.500 33" stroke="#e80000" strokeWidth="1.200" />
    <path d="M1786 175.500h5l-5 6.500h5" fill="none" stroke="#0000e0" strokeWidth="1.100" /><path d="M1840 269l5 7M1845 269l-5 7" stroke="#e80000" strokeWidth="1.100" />
    <path d="M1863.500 263.500 1874.500 259.500 1886 263.500V277.500L1874.500 281.500 1863.500 278z" fill="#d9d9d9" stroke="#70807f" strokeDasharray="2 1" />
    <path d="M1863.500 263.500 1874.500 259.500 1886 263.500 1874.500 267.500z" fill="#f6f6f6" /><path d="M1863.500 263.500l11 4v14l-11-4z" fill="#bdbdbd" />
    <path d="M1890 267h14l-7 7z" fill="#3c3c3c" />
  </g>
);
const AxisCross = () => (
  <g shapeRendering="crispEdges">
    <path d="M1876 966v-20" stroke="#1f2180" strokeWidth="2" /><path d="M1876 937l3 13h-6z" fill="#1f2180" stroke="#1f2180" strokeWidth=".5" />
    <path d="M1877 966l10-5" stroke="#23802a" strokeWidth="1.500" /><path d="M1894.500 956.500l-5 5.500-3.500-4z" fill="#23802a" stroke="#23802a" />
    <path d="M1877 967.500l16 9" stroke="#7f1f22" strokeWidth="1.500" /><path d="M1890 977.500l2.500-4 9.500 8.500z" fill="#7f1f22" stroke="#7f1f22" />
    <g stroke="#000" strokeWidth="1" fill="none"><path d="M1879 931.500h5l-5 6.500h5" /><path d="M1897.500 950.500l2.200 3 2.200-3M1899.700 953.500v3.500" /><path d="M1904 975.500l5 6.500M1909 975.500l-5 6.500" /></g>
  </g>
);
const Scene = () => (
  <svg width="1457" height="881" viewBox="463 130 1457 881" className="block">
    <Solid dx={0} dy={0} fill="#7f6e20" />
    <Solid dx={127} dy={283} fill="#36482b" />
    <Solid dx={0} dy={419.300} fill="#6a8f25" />
    <path d="M1038.500 560.700V577.500h4l1.500 2.300 3.200.3.500-5 3.200-3.400z" fill="#4c4c4c" stroke="#fff" strokeWidth="1.100" />
    <NavCube />
    <AxisCross />
  </svg>
);

export default function App() {
  return (
    <div className="flex h-[1080px] w-[1920px] flex-col overflow-hidden bg-[#191d28] font-['Noto_Sans',sans-serif] text-sm leading-5 text-[#d3dae3]">
      <header className="grid h-[22px] shrink-0 grid-cols-3 items-center bg-[#0d0e13]">
        <div className="flex items-center gap-2 pl-[5px] pt-[2px]">
          <Logo />
          <div className="size-[14px] rounded-full bg-linear-to-r from-[#33cfe0] to-[#6080ea]" />
        </div>
        <div className="-ml-[22px] text-center text-[13.9px] text-[#cfd1d6]">FreeCAD 0.18.4</div>
        <div className="flex justify-end gap-2 pr-[5px] pt-[2px]">
          <div className="size-[14px] rounded-full bg-linear-to-r from-[#ffe607] to-[#ffae33]" />
          <div className="size-[14px] rounded-full bg-linear-to-r from-[#d202d8] to-[#8007ff]" />
          <div className="size-[14px] rounded-full bg-linear-to-r from-[#ff3a6b] to-[#ff5a21]" />
        </div>
      </header>

      <nav className="flex h-8 shrink-0 items-center pl-[10px]">
        {menus.map(([m, w]) => <div key={m} className={"shrink-0 whitespace-nowrap " + w}>{m}</div>)}
      </nav>

      <div className="flex h-[38px] shrink-0 items-center">
        <Handle first />
        <Bar items={[<INew />, <IOpen />, <ISave />, <IPrint />, "|", <ICut />, <ICopy />, <IPaste />, "|", <IUndo />, "d", <IRedo />, "d", "|", <IRefresh />, "|", <IHelp />, "H"]} />
        <div className="ml-px flex h-8 w-[190px] shrink-0 items-center rounded-[3px] border border-[#c80fd0] bg-[#1f2233] pl-[6px] pr-1">
          <IWorkbench />
          <span className="ml-1 flex-1 text-[#c3c7d1]">Part Design</span>
          <Chevron color="#b9bcc6" />
        </div>
        <div className="w-px" />
        <Bar items={["H", <IRecord />, <IStop />, <IEdit />, <IPlay />]} />
      </div>

      <div className="flex h-[38px] shrink-0 items-center">
        <Handle first />
        <Bar items={[<IFit />, <IFit />, <IDraw />, "v", "|", <IIso />, "|", <ICube face="front" />, <ICube face="top" />, <ICube face="right" />, "|", <ICube face="rear" />, <ICube face="bottom" />, <ICube face="left" />, "|", <IRuler />, "H", <IPart />, <IGroup />, "H",
          <IBody />, <ISketch />, <IMap />, <IMapSketch />, "|", <IPoint />, <ILine />, <IPlane />, <IAxes />, <IBinder />, <ISheep />, "H",
          <IPad />, <IRevolve />, <Loft f={Y} o="#d01212" />, <Sweep f={Y} o="#d01212" />, <PrimBox f={Y} d="#d01212" />, "v", "|",
          <IPocket />, <IHole />, <IGroove />, <Loft f={R} o="#4a80bd" />, <Sweep f={R} o="#4a80bd" />, <PrimBox f={R} d="#4a80bd" />, "v", "|",
          <Mirror />, <ILinear />, <IPolar />, <IMulti />, "|", <IFillet />, <IChamfer />, <IDraft />, <IShell />, "|", <IBool />]} />
      </div>

      <main className="flex h-[908px] shrink-0">
        <aside className="ml-px mt-[1px] flex h-[907px] w-[460px] shrink-0 flex-col rounded-[3px] border border-[#484b56]">
          <div className="flex h-[29px] shrink-0 items-center pl-[5px] pr-[6px] pb-[3px]">
            <span className="mb-px flex-1">Vista combinada</span>
            <svg width="10" height="10" viewBox="0 0 10 10" className="mr-[10px]"><path d="M5 1 8.800 5 5 9 1.200 5z" fill="none" stroke="#a5a8b0" strokeWidth="1.200" /></svg>
            <CloseDot />
          </div>
          <div className="relative z-10 ml-px flex h-7 shrink-0 text-center">
            <div className="h-[28px] w-[80px] rounded-t-[3px] border border-b-0 border-[#484b56] bg-[#191d28] pt-[3px]">Modelo</div>
            <div className="h-[27px] w-[80px] bg-[#151822] pt-[4px]">Tareas</div>
          </div>
          <div className="mx-px -mt-px mb-px flex min-h-0 flex-1 flex-col rounded-[3px] rounded-tl-none border border-[#484b56] px-[3px] pt-[3px]">
            <section className="flex h-[532px] shrink-0 flex-col rounded-[3px] border border-[#484b56] bg-[#171923]">
              <div className="flex h-8 shrink-0 items-center border-b border-[#33364a] bg-[#1f2233] pl-[6px] pt-px text-[#b9bfca]">Etiquetas &amp; Atributos</div>
              <div className="flex h-[26px] shrink-0 items-center pl-[3px]">Aplicación</div>
              {tree.map((r) => (
                <div key={r.label} className="flex h-7 shrink-0 items-center">
                  {r.b.map((k, i) => <Branch key={i} kind={k.replace("!", "")} last={k.endsWith("!")} />)}
                  <div className="ml-0.5 flex w-[18px] items-center justify-center">{r.icon}</div>
                  <span className={r.bold ? "ml-[5px] font-semibold tracking-[-0.2px]" : r.dim ? "ml-[5px] text-[#555963]" : "ml-[5px]"}>{r.label}</span>
                </div>
              ))}
            </section>
            <section className="mt-[3px] flex h-[278px] shrink-0 rounded-[3px] rounded-bl-none border border-[#484b56] p-[3px]">
              <div className="flex flex-1 flex-col rounded-[3px] border border-[#484b56] bg-[#171923]">
                <div className="flex h-8 shrink-0 items-center border-b border-[#33364a] bg-[#1f2233] text-[#b9bfca]">
                  <div className="flex h-full w-[105px] items-center border-r border-[#484b56] pl-[6px] pt-px">Propiedad</div>
                  <div className="flex h-full flex-1 items-center border-r border-[#484b56] pl-[6px] pt-px">Valor</div>
                </div>
              </div>
            </section>
            <div className="relative z-10 -mt-px flex h-[28px] shrink-0 text-center">
              <div className="mt-px h-[27px] w-[80px] bg-[#151822] pt-[3px]">Vista</div>
              <div className="h-[28px] w-[80px] rounded-b-[3px] border border-t-0 border-[#484b56] bg-[#191d28] pt-[4px]">Datos</div>
            </div>
          </div>
        </aside>

        <div className="ml-[2px] flex w-[1457px] flex-col">
          <div className="h-[881px] shrink-0 bg-linear-to-b from-[#7acac4] to-[#588bab]"><Scene /></div>
          <div className="flex h-[27px] shrink-0">
            <div className="flex h-[28px] w-[235px] items-center rounded-b-[3px] border border-t-0 border-[#484b56] pl-[7px] pr-[7px]">
              <Logo />
              <span className="ml-[10px] flex-1 whitespace-nowrap">cadin360 Excercise-006 : 1</span>
              <CloseDot />
            </div>
            <div className="flex-1 border-t border-[#484b56]" />
          </div>
        </div>
      </main>

      <footer className="flex flex-1 items-center justify-end pr-px">
        <svg width="10" height="15" viewBox="0 0 10 15" fill="none" className="mr-[7px] mt-0.5"><rect x=".7" y=".7" width="8.600" height="13.200" rx="3.500" stroke="#33373e" strokeWidth="1.400" /><path d="M5 3v4" stroke="#33373e" strokeWidth="2.500" /></svg>
        <span className="mt-0.5">Blender</span>
        <div className="ml-[12px] mr-[12px] mt-0.5"><Chevron /></div>
        <span className="mt-0.5">283.76 mm x 171.58 mm</span>
      </footer>
    </div>
  );
}
